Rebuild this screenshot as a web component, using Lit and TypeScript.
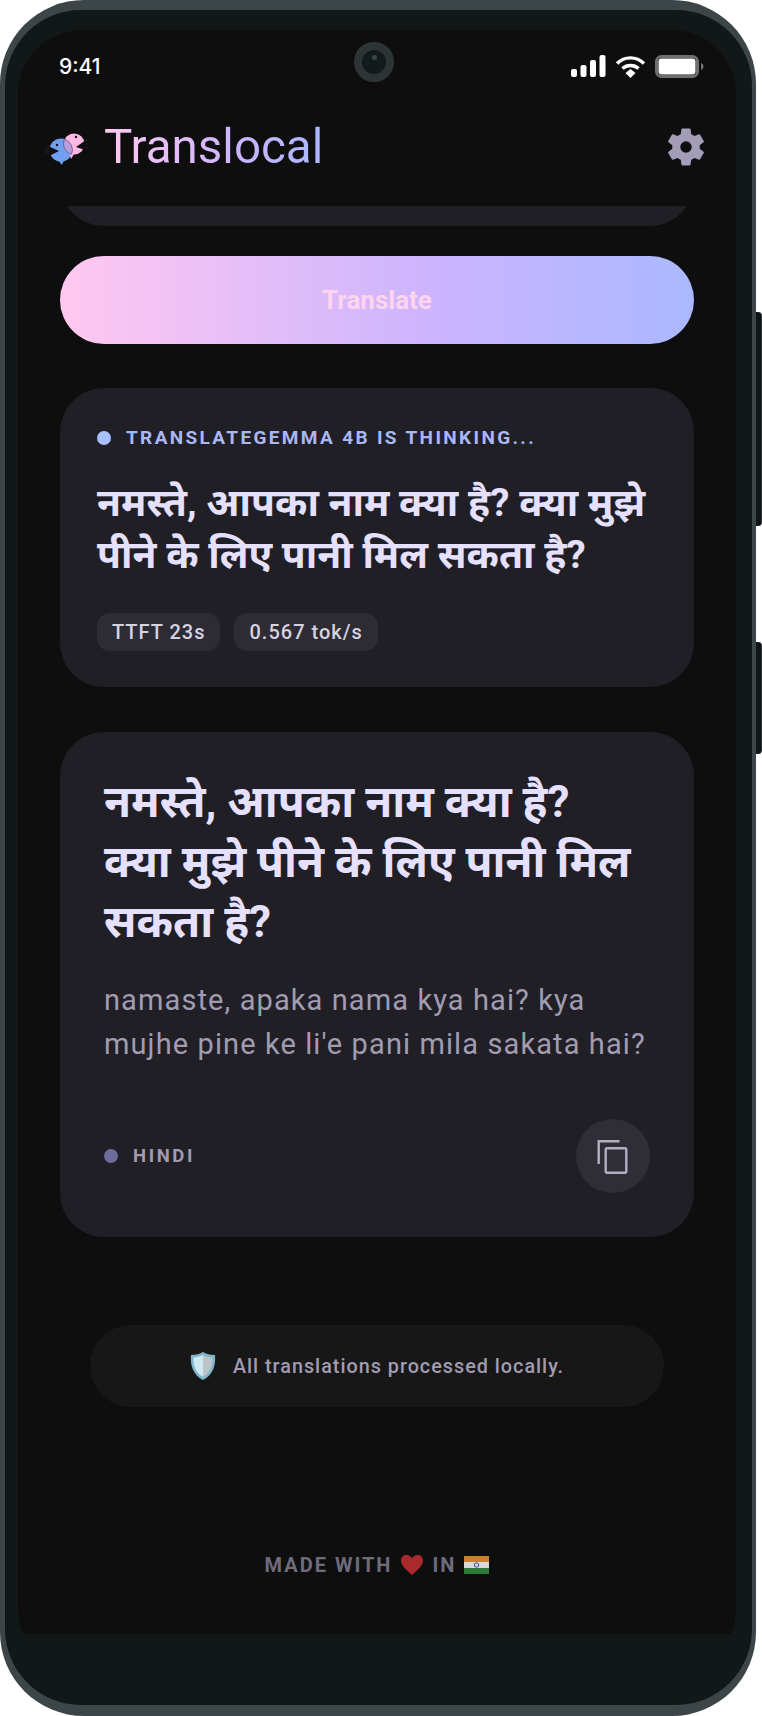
import { LitElement, html, css, svg } from 'lit';
import { customElement } from 'lit/decorators.js';

const hindiLine = 'नमस्ते, आपका नाम क्या है? क्या मुझे पीने के लिए पानी मिल सकता है?';

const logo = svg`
  <circle cx="16" cy="33" r="11.5" fill="#6f9fee" />
  <path d="M13 43h6l-2 5z" fill="#6f9fee" />
  <path d="M3 29l11 5-10 5z" fill="#0e0e12" />
  <circle cx="29" cy="27" r="10.500" fill="#fdb9e3" />
  <path d="M24 35l5 2-3 5z" fill="#fdb9e3" />
  <path d="M41 23l-10 7 9 3z" fill="#0e0e12" />
  <path d="M19.700 22.200A10.500 10.500 0 0 0 26.700 37.200 11.500 11.500 0 0 0 19.700 22.200z" fill="#b79ee0" stroke="#2a2a4a" stroke-width=".5" />
  <circle cx="12" cy="28" r="1.200" fill="#14142a" />
  <circle cx="31" cy="20" r="1.200" fill="#14142a" />
  <path d="M1 30v7M3 29v9M40 24l3-1M40 27h4M40 30l3 1" stroke="#2b2b44" stroke-width=".6" fill="none" />
`;

@customElement('app-root')
export class AppRoot extends LitElement {
  static styles = css`
    :host {
      display: block;
      width: 762px;
      height: 1716px;
      background: #fff;
      font-family: Roboto, 'Noto Sans Devanagari', 'Lohit Devanagari', 'FreeSans', sans-serif;
    }
    .frame {
      position: relative;
      box-sizing: border-box;
      width: 756px;
      height: 1716px;
      padding: 10px 4px 11px 5px;
      border-radius: 84px;
      background: #3c4548;
    }
    .side-btn {
      position: absolute;
      left: 756px;
      width: 6px;
      background: #101516;
      border-radius: 0 4px 4px 0;
      border-right: 1px solid #2f3638;
      box-sizing: border-box;
    }
    .volume {
      top: 312px;
      height: 214px;
    }
    .power {
      top: 642px;
      height: 112px;
    }
    .bezel {
      box-sizing: border-box;
      height: 100%;
      padding: 20px 16px 71px 13px;
      border-radius: 76px;
      background: #121718;
    }
    .screen {
      position: relative;
      height: 100%;
      overflow: hidden;
      border-radius: 64px 64px 7px 7px / 64px 64px 30px 30px;
      background: #0e0e0f;
    }
    .status {
      display: flex;
      align-items: center;
      justify-content: space-between;
      height: 72px;
      padding: 0 31px 0 41px;
      color: #fff;
      font-family: Inter, 'Liberation Sans', sans-serif;
      font-size: 21px;
      font-weight: 500;
    }
    .status-icons {
      display: flex;
      align-items: center;
      gap: 9px;
    }
    .camera {
      position: absolute;
      left: 336px;
      top: 12px;
      width: 40px;
      height: 40px;
      box-sizing: border-box;
      border: 8px solid #2d3436;
      border-radius: 50%;
      background: #121a1c;
    }
    .camera::after {
      content: '';
      position: absolute;
      left: 9.500px;
      top: 4.500px;
      width: 5px;
      height: 5px;
      border-radius: 50%;
      background: #3a484b;
    }
    .header {
      display: flex;
      align-items: center;
      justify-content: space-between;
      height: 90px;
      padding: 0 27px 14px 27px;
    }
    .brand {
      display: flex;
      align-items: center;
    }
    .title {
      font-size: 47.500px;
      font-weight: 400;
      background: linear-gradient(90deg, #ffc8f0, #cbb4ff 60%, #a9b8ff);
      -webkit-background-clip: text;
      background-clip: text;
      color: transparent;
    }
    .content {
      display: flex;
      flex-direction: column;
      padding: 0 42px;
    }
    .strip {
      height: 20px;
      overflow: hidden;
    }
    .strip-card {
      height: 100px;
      margin-top: -80px;
      border-radius: 44px;
      background: #211f26;
    }
    .translate {
      display: flex;
      align-items: center;
      justify-content: center;
      height: 88px;
      margin-top: 30px;
      border-radius: 44px;
      background: linear-gradient(90deg, #ffc8f0, #cbb4ff 60%, #aab9ff);
      color: #ffd4ee;
      font-size: 26px;
      font-weight: 700;
    }
    .card {
      border-radius: 44px;
      background: #211f26;
      box-sizing: border-box;
    }
    .thinking {
      height: 299px;
      margin-top: 44px;
      padding: 38px 37px;
    }
    .label {
      display: flex;
      align-items: center;
      gap: 15px;
      color: #a9b8f5;
      font-size: 19px;
      font-weight: 700;
      letter-spacing: 2.350px;
    }
    .dot {
      width: 14px;
      height: 14px;
      border-radius: 50%;
      background: #a9c0ff;
    }
    .partial {
      margin-top: 28px;
      color: #e6e0ff;
      font-size: 39px;
      font-weight: 700;
      line-height: 52px;
    }
    .chips {
      display: flex;
      gap: 14px;
      margin-top: 32px;
    }
    .chip {
      display: flex;
      align-items: center;
      height: 38px;
      padding: 0 15px;
      border-radius: 13px;
      background: #2d2b33;
      color: #d6d2e0;
      font-size: 20px;
      font-weight: 500;
      letter-spacing: 1px;
    }
    .result {
      display: flex;
      flex-direction: column;
      height: 505px;
      margin-top: 45px;
      padding: 40px 44px 44px;
    }
    .hindi {
      max-width: 530px;
      color: #e6e0ff;
      font-size: 44px;
      font-weight: 700;
      line-height: 60px;
    }
    .roman {
      margin-top: 26px;
      color: #a19cb1;
      font-size: 29px;
      letter-spacing: 1.100px;
      line-height: 44px;
    }
    .result-foot {
      display: flex;
      align-items: center;
      justify-content: space-between;
      margin-top: auto;
    }
    .language {
      display: flex;
      align-items: center;
      gap: 15px;
      color: #a19cb1;
      font-size: 18.500px;
      font-weight: 700;
      letter-spacing: 2.600px;
    }
    .lang-dot {
      width: 14px;
      height: 14px;
      border-radius: 50%;
      background: #6d6c9c;
    }
    .copy {
      display: flex;
      align-items: center;
      justify-content: center;
      width: 74px;
      height: 74px;
      border-radius: 50%;
      background: #2f2d36;
    }
    .privacy {
      display: flex;
      align-items: center;
      justify-content: center;
      gap: 17px;
      height: 82px;
      margin: 88px 30px 0;
      border-radius: 41px;
      background: #171717;
      color: #a19cb1;
      font-size: 19.800px;
      font-weight: 500;
      letter-spacing: 1px;
    }
    .made {
      display: flex;
      align-items: center;
      justify-content: center;
      gap: 8px;
      margin-top: 146px;
      color: #6e6b7a;
      font-size: 20px;
      font-weight: 700;
      letter-spacing: 2px;
    }
  `;

  render() {
    return html`
      <div class="frame">
        <div class="side-btn volume"></div>
        <div class="side-btn power"></div>
        <div class="bezel">
          <div class="screen">
            <div class="status">
              <span>9:41</span>
              <div class="status-icons">
                <svg width="35" height="22" viewBox="0 0 35 22" fill="#fff">
                  <rect x="0" y="14" width="6" height="8" rx="2" />
                  <rect x="9.500" y="10" width="6" height="12" rx="2" />
                  <rect x="19" y="5" width="6" height="17" rx="2" />
                  <rect x="28.500" y="0" width="6" height="22" rx="2" />
                </svg>
                <svg width="31" height="23" viewBox="0 0 31 23" fill="none" stroke="#fff" stroke-width="3.400">
                  <path d="M2 8.500C9.500 1 21.500 1 29 8.500" />
                  <path d="M7.500 13.500c4.500-4 11.500-4 16 0" />
                  <path d="M10.500 18l5-4 5 4-5 5z" fill="#fff" stroke="none" />
                </svg>
                <svg width="50" height="23" viewBox="0 0 50 23">
                  <rect x="1.500" y="1.500" width="41" height="20" rx="5" fill="none" stroke="#6f6f6f" stroke-width="3" />
                  <rect x="3.500" y="3.500" width="37" height="16" rx="3" fill="#fff" />
                  <path d="M46 8c2 1 2.500 2 2.500 3.500s-.5 2.500-2.500 3.500z" fill="#6f6f6f" />
                </svg>
              </div>
            </div>
            <div class="camera"></div>
            <div class="header">
              <div class="brand">
                <svg width="59" height="60" viewBox="0 0 59 60">${logo}</svg>
                <span class="title">Translocal</span>
              </div>
              <svg width="46" height="46" viewBox="0 0 24 24" fill="#a49db8">
                <path d="M19.140 12.940c.04-.3.06-.61.06-.94s-.02-.64-.07-.94l2.030-1.580a.49.49 0 0 0 .12-.61l-1.920-3.320a.49.49 0 0 0-.59-.22l-2.390.96a7 7 0 0 0-1.620-.94l-.36-2.540a.48.48 0 0 0-.48-.41h-3.840a.48.48 0 0 0-.47.41l-.36 2.540c-.59.24-1.130.57-1.620.94l-2.390-.96a.48.48 0 0 0-.59.22L2.740 8.870c-.12.21-.08.47.12.61l2.030 1.580c-.05.3-.09.63-.09.94s.02.64.07.94l-2.030 1.580a.49.49 0 0 0-.12.61l1.920 3.320c.12.22.37.29.59.22l2.390-.96c.5.38 1.030.7 1.620.94l.36 2.540c.05.24.24.41.48.41h3.840c.24 0 .44-.17.47-.41l.36-2.540c.59-.24 1.130-.56 1.620-.94l2.390.96c.22.08.47 0 .59-.22l1.920-3.320a.47.47 0 0 0-.12-.61zM12 15a3 3 0 1 1 0-6 3 3 0 0 1 0 6z" />
              </svg>
            </div>
            <div class="content">
              <div class="strip"><div class="strip-card"></div></div>
              <div class="translate">Translate</div>
              <div class="card thinking">
                <div class="label"><span class="dot"></span>TRANSLATEGEMMA 4B IS THINKING...</div>
                <div class="partial">${hindiLine}</div>
                <div class="chips">
                  <span class="chip">TTFT 23s</span>
                  <span class="chip">0.567 tok/s</span>
                </div>
              </div>
              <div class="card result">
                <div class="hindi">${hindiLine}</div>
                <div class="roman">namaste, apaka nama kya hai? kya mujhe pine ke li'e pani mila sakata hai?</div>
                <div class="result-foot">
                  <div class="language"><span class="lang-dot"></span>HINDI</div>
                  <div class="copy">
                    <svg width="36" height="36" viewBox="0 0 36 36" fill="none" stroke="#b3aec2" stroke-width="2.400">
                      <path d="M24.500 3.200H3.700V26" />
                      <rect x="10.700" y="10.200" width="20.600" height="24.600" rx="1.500" />
                    </svg>
                  </div>
                </div>
              </div>
              <div class="privacy">
                <svg width="26" height="30" viewBox="0 0 26 30">
                  <path d="M13 1c3 2 7 3 12 3 1 10-2 20-12 25C3 24 0 14 1 4c5 0 9-1 12-3z" fill="#7fb5c8" />
                  <path d="M13 4c3 1.500 6 2.500 9.500 2.500C23 15 20 22 13 26z" fill="#bcc4c8" />
                  <path d="M13 4C10 5.500 7 6.500 3.500 6.500 3 15 6 22 13 26z" fill="#cfe9f2" />
                </svg>
                <span>All translations processed locally.</span>
              </div>
              <div class="made">
                <span>MADE WITH</span>
                <svg width="24" height="22" viewBox="0 0 24 22">
                  <path d="M12 21C5 15 1 11 1 6.500 1 3 3.500 1 6.500 1 9 1 11 2.500 12 4.500 13 2.500 15 1 17.500 1 20.500 1 23 3 23 6.500 23 11 19 15 12 21z" fill="#a82a2a" />
                </svg>
                <span>IN</span>
                <svg width="25" height="18" viewBox="0 0 25 18">
                  <rect width="25" height="6" fill="#c9822c" />
                  <rect y="6" width="25" height="6" fill="#d8d8d8" />
                  <rect y="12" width="25" height="6" fill="#2f7a36" />
                  <circle cx="12.500" cy="9" r="2.200" fill="none" stroke="#3d4b8c" stroke-width="1" />
                </svg>
              </div>
            </div>
          </div>
        </div>
      </div>
    `;
  }
}
